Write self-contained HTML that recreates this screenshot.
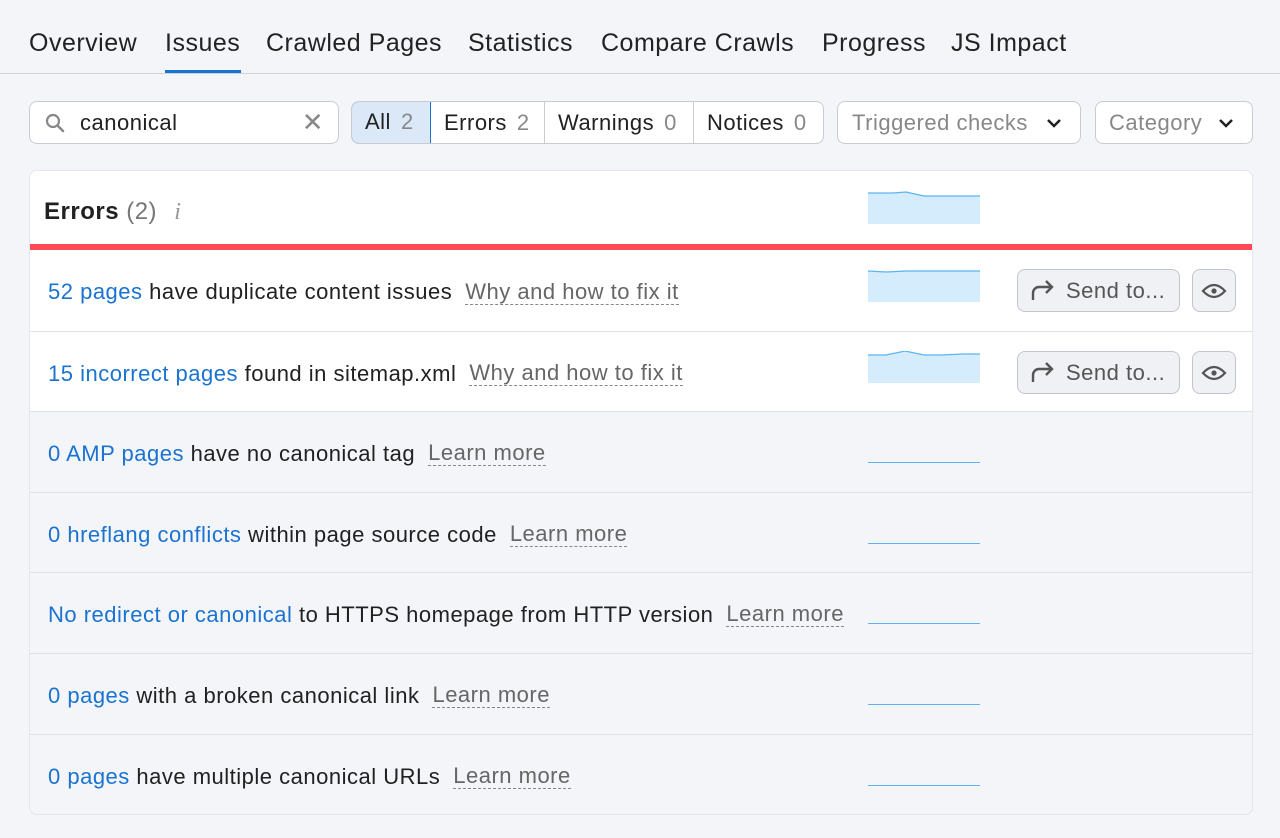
<!DOCTYPE html>
<html><head><style>
*{box-sizing:border-box;margin:0;padding:0}
body{width:1280px;height:838px;background:#f4f5f9;font-family:"Liberation Sans",sans-serif;color:#212121;position:relative;overflow:hidden;letter-spacing:0.5px}
.abs{position:absolute}
.tab{position:absolute;top:29px;font-size:25px;color:#222}
.btn{position:absolute;border:1px solid #c8cbd2;background:#fff;height:43px;top:101px;border-radius:8px;font-size:22px;display:flex;align-items:center}
.seg{height:100%;display:flex;align-items:center;padding:0 13px;border-right:1px solid #c8cbd2;white-space:nowrap}
.seg span{color:#888;margin-left:10px}
.card{position:absolute;left:29px;top:170px;width:1224px;height:645px;border-radius:8px;background:#f4f5f9;border:1px solid #e4e6eb;overflow:hidden}
.row{position:absolute;left:0;width:1224px;height:81px;border-top:1px solid #dfe1e6;font-size:22px;display:flex;align-items:center;padding-left:18px;padding-top:3px;white-space:nowrap}
.row a{color:#1a73d0;text-decoration:none}
.row .u{color:#666;border-bottom:1.5px dashed #888;margin-left:13px;line-height:24px}
.spark{position:absolute;left:838px;width:112px;height:1px;background:#5ab4f0;top:50px}
.send{position:absolute;left:987px;width:163px;height:43px;border:1px solid #c2c5cc;border-radius:8px;background:#f0f1f4;display:flex;align-items:center;font-size:22px;color:#555;padding-left:12px}
.eye{position:absolute;left:1162px;width:44px;height:43px;border:1px solid #c2c5cc;border-radius:8px;background:#f0f1f4;display:flex;align-items:center;justify-content:center}
</style></head><body>
<div class="tab" style="left:29px">Overview</div>
<div class="tab" style="left:165px">Issues</div>
<div class="abs" style="left:165px;top:70px;width:76px;height:4px;background:#1a73d0"></div>
<div class="tab" style="left:266px">Crawled Pages</div>
<div class="tab" style="left:468px">Statistics</div>
<div class="tab" style="left:601px">Compare Crawls</div>
<div class="tab" style="left:822px">Progress</div>
<div class="tab" style="left:951px">JS Impact</div>
<div class="abs" style="left:0;top:73px;width:1280px;height:1px;background:#cfd2d8"></div>

<div class="btn" style="left:29px;width:310px;padding-left:14px">
<svg width="22" height="22" viewBox="0 0 22 22"><circle cx="9" cy="9" r="6" fill="none" stroke="#888" stroke-width="2.2"/><path d="M13.5 13.5L19 19" stroke="#888" stroke-width="2.5" stroke-linecap="round"/></svg>
<span style="margin-left:14px">canonical</span>
<span style="position:absolute;right:14px;color:#888;font-size:26px">✕</span></div>

<div class="btn" style="left:351px;width:473px;overflow:hidden">
<div class="seg" style="background:#dbe8f8;border:1px solid #1a73d0;border-radius:8px 0 0 8px;height:43px;margin:-1px 0 0 -1px;width:80px">All<span>2</span></div>
<div class="seg" style="width:114px">Errors<span>2</span></div>
<div class="seg" style="width:149px">Warnings<span>0</span></div>
<div class="seg" style="border:none">Notices<span>0</span></div></div>

<div class="btn" style="left:837px;width:244px;padding-left:14px;color:#888">Triggered checks<svg class="abs" style="right:18px" width="16" height="10" viewBox="0 0 16 10"><path d="M2 2l6 6 6-6" fill="none" stroke="#222" stroke-width="2.5"/></svg></div>
<div class="btn" style="left:1095px;width:158px;padding-left:13px;color:#888">Category<svg class="abs" style="right:18px" width="16" height="10" viewBox="0 0 16 10"><path d="M2 2l6 6 6-6" fill="none" stroke="#222" stroke-width="2.5"/></svg></div>

<div class="card">
<div class="abs" style="left:0;top:0;width:1224px;height:240px;background:#fff"></div>
<div class="abs" style="left:14px;top:27px;font-size:24px"><b>Errors</b> <span style="color:#777">(2)</span> <i style="color:#999;font-family:'Liberation Serif';margin-left:10px">i</i></div>
<svg class="abs" style="left:838px;top:20px" width="112" height="33"><path d="M0 2L25 2L38 1L56 5L112 5L112 33L0 33Z" fill="#d5ecfc"/><path d="M0 2L25 2L38 1L56 5L112 5" fill="none" stroke="#5ab4f0" stroke-width="1.2"/></svg>
<div class="abs" style="left:0;top:73px;width:1224px;height:6px;background:#ff4953"></div>
<div class="row" style="top:79px;border:none;background:#fff"><a>52 pages</a>&nbsp;have duplicate content issues<span class="u">Why and how to fix it</span>
<svg class="abs" style="left:838px;top:20px" width="112" height="32"><path d="M0 1L18 2L38 1L112 1L112 32L0 32Z" fill="#d5ecfc"/><path d="M0 1L18 2L38 1L112 1" fill="none" stroke="#5ab4f0" stroke-width="1.2"/></svg>
<div class="send" style="top:19px"><svg width="26" height="22" viewBox="0 0 26 22"><path d="M3 20V13a6 6 0 0 1 6-6h13M16 1l6 6-6 6" fill="none" stroke="#555" stroke-width="2.4"/></svg><span style="margin-left:10px">Send to...</span></div>
<div class="eye" style="top:19px"><svg width="26" height="18" viewBox="0 0 26 18"><path d="M2 9Q13-3 24 9Q13 21 2 9Z" fill="none" stroke="#555" stroke-width="2.2"/><circle cx="13" cy="9" r="2.6" fill="#555"/></svg></div></div>
<div class="row" style="top:160px;background:#fff"><a>15 incorrect pages</a>&nbsp;found in sitemap.xml<span class="u">Why and how to fix it</span>
<svg class="abs" style="left:838px;top:19px" width="112" height="32"><path d="M0 4L18 4L37 0L56 4L74 4L94 3L112 3L112 32L0 32Z" fill="#d5ecfc"/><path d="M0 4L18 4L37 0L56 4L74 4L94 3L112 3" fill="none" stroke="#5ab4f0" stroke-width="1.2"/></svg>
<div class="send" style="top:19px"><svg width="26" height="22" viewBox="0 0 26 22"><path d="M3 20V13a6 6 0 0 1 6-6h13M16 1l6 6-6 6" fill="none" stroke="#555" stroke-width="2.4"/></svg><span style="margin-left:10px">Send to...</span></div>
<div class="eye" style="top:19px"><svg width="26" height="18" viewBox="0 0 26 18"><path d="M2 9Q13-3 24 9Q13 21 2 9Z" fill="none" stroke="#555" stroke-width="2.2"/><circle cx="13" cy="9" r="2.6" fill="#555"/></svg></div></div>
<div class="row" style="top:240px"><a>0 AMP pages</a>&nbsp;have no canonical tag<span class="u">Learn more</span><div class="spark"></div></div>
<div class="row" style="top:321px"><a>0 hreflang conflicts</a>&nbsp;within page source code<span class="u">Learn more</span><div class="spark"></div></div>
<div class="row" style="top:401px"><a>No redirect or canonical</a>&nbsp;to HTTPS homepage from HTTP version<span class="u">Learn more</span><div class="spark"></div></div>
<div class="row" style="top:482px"><a>0 pages</a>&nbsp;with a broken canonical link<span class="u">Learn more</span><div class="spark"></div></div>
<div class="row" style="top:563px"><a>0 pages</a>&nbsp;have multiple canonical URLs<span class="u">Learn more</span><div class="spark"></div></div>
</div>
</body></html>
